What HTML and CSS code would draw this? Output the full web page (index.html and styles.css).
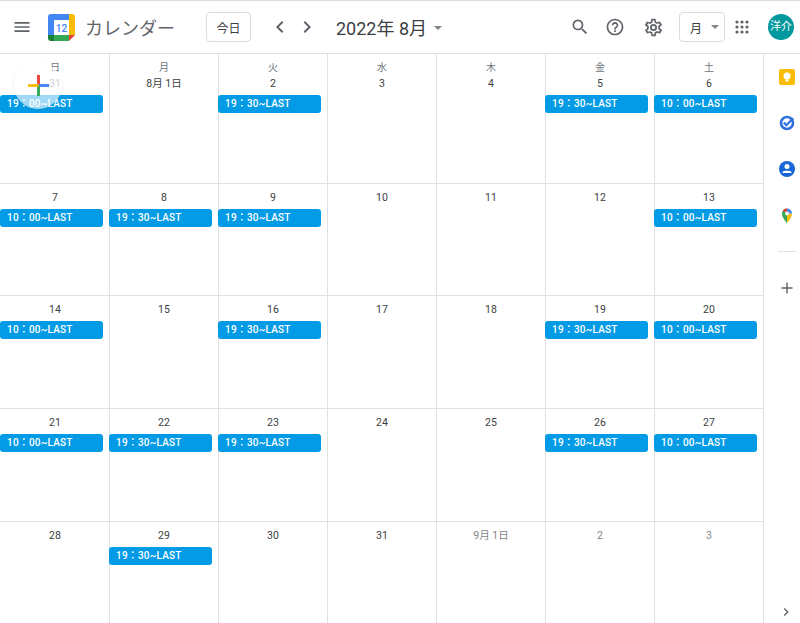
FILE: index.html
```html
<!DOCTYPE html>
<html lang="ja">
<head>
    <meta charset="UTF-8">
    <title>カレンダー</title>
    <link rel="stylesheet" href="styles.css">
</head>
<body>
    <header class="topbar">
        <button class="menu-btn" aria-label="メニュー">
            <svg width="20" height="20" viewBox="0 0 24 24" fill="#5f6368"><path d="M3 18h18v-2H3v2zm0-5h18v-2H3v2zm0-7v2h18V6H3z"/></svg>
        </button>
        <svg class="logo" width="27" height="27" viewBox="0 0 27 27">
            <path fill="#4285f4" d="M3 0h18v6H6v15H0V3a3 3 0 0 1 3-3z"/>
            <path fill="#fbbc04" d="M21 0h3a3 3 0 0 1 3 3v18h-6z"/>
            <path fill="#34a853" d="M6 21h15v6H6z"/>
            <path fill="#188038" d="M0 21h6v6H3a3 3 0 0 1-3-3z"/>
            <path fill="#ea4335" d="M21 27v-6h6z"/>
            <rect x="6" y="6" width="15" height="15" fill="#fff"/>
            <text x="13.5" y="17.5" class="logo-num">12</text>
        </svg>
        <span class="app-name">カレンダー</span>
        <button class="today-btn">今日</button>
        <div class="nav-arrows">
            <svg width="24" height="24" viewBox="0 0 24 24" fill="#5f6368"><path d="M15.4 7.4 14 6l-6 6 6 6 1.4-1.4-4.6-4.6z"/></svg>
            <svg width="24" height="24" viewBox="0 0 24 24" fill="#5f6368"><path d="M8.6 7.4 10 6l6 6-6 6-1.4-1.4 4.6-4.6z"/></svg>
        </div>
        <span class="month-title">2022年 8月</span>
        <span class="caret month-caret"></span>
        <div class="topbar-right">
            <svg width="20" height="20" viewBox="0 0 24 24" fill="#5f6368"><path d="M15.5 14h-.79l-.28-.27A6.47 6.47 0 0 0 16 9.5 6.5 6.5 0 1 0 9.5 16c1.61 0 3.09-.59 4.23-1.57l.27.28v.79l5 4.99L20.49 19l-4.99-5zm-6 0C7.01 14 5 11.99 5 9.5S7.01 5 9.5 5 14 7.01 14 9.5 11.99 14 9.5 14z"/></svg>
            <svg class="help-icon" width="20" height="20" viewBox="0 0 24 24" fill="#5f6368"><path d="M11 18h2v-2h-2v2zm1-16C6.48 2 2 6.48 2 12s4.48 10 10 10 10-4.48 10-10S17.52 2 12 2zm0 18c-4.41 0-8-3.59-8-8s3.59-8 8-8 8 3.59 8 8-3.59 8-8 8zm0-14c-2.21 0-4 1.79-4 4h2c0-1.1.9-2 2-2s2 .9 2 2c0 2-3 1.75-3 5h2c0-2.25 3-2.5 3-5 0-2.21-1.79-4-4-4z"/></svg>
            <svg class="gear-icon" width="21" height="21" viewBox="0 0 24 24" fill="#5f6368"><path d="M19.4 13a7.5 7.5 0 0 0 0-2l2.100-1.600a.5.5 0 0 0 .1-.6l-2-3.500a.5.5 0 0 0-.6-.2l-2.500 1a7.300 7.300 0 0 0-1.700-1l-.4-2.700a.5.5 0 0 0-.5-.4h-4a.5.5 0 0 0-.5.4l-.4 2.700a7.300 7.300 0 0 0-1.700 1l-2.500-1a.5.5 0 0 0-.6.2l-2 3.500a.5.5 0 0 0 .1.600L4.600 11a7.500 7.500 0 0 0 0 2l-2.100 1.600a.5.5 0 0 0-.1.600l2 3.500c.1.200.4.300.6.200l2.500-1c.5.400 1.100.7 1.700 1l.4 2.700c0 .2.200.4.500.4h4c.2 0 .5-.2.500-.4l.4-2.700c.6-.3 1.200-.6 1.700-1l2.500 1c.2.100.5 0 .6-.2l2-3.500a.5.5 0 0 0-.1-.6zm-1.900-1c0 .7-.1 1.200-.2 1.700l1.900 1.500-1 1.700-2.300-.9a6 6 0 0 1-2.600 1.500l-.3 2.500h-2l-.3-2.500a6 6 0 0 1-2.600-1.500l-2.300.9-1-1.700 1.900-1.500a6 6 0 0 1 0-3.400L4.800 8.800l1-1.700 2.300.9a6 6 0 0 1 2.600-1.500L11 4h2l.3 2.500A6 6 0 0 1 15.900 8l2.300-.9 1 1.700-1.900 1.500c.1.500.2 1 .2 1.700zM12 8a4 4 0 1 0 0 8 4 4 0 0 0 0-8zm0 6a2 2 0 1 1 0-4 2 2 0 0 1 0 4z"/></svg>
            <button class="view-btn">月<span class="caret"></span></button>
            <svg class="apps-icon" width="14" height="14" viewBox="0 0 14 14" fill="#5f6368">
                <circle cx="2" cy="2" r="1.6"/><circle cx="7" cy="2" r="1.6"/><circle cx="12" cy="2" r="1.6"/>
                <circle cx="2" cy="7" r="1.6"/><circle cx="7" cy="7" r="1.6"/><circle cx="12" cy="7" r="1.6"/>
                <circle cx="2" cy="12" r="1.6"/><circle cx="7" cy="12" r="1.6"/><circle cx="12" cy="12" r="1.6"/>
            </svg>
            <div class="avatar">洋介</div>
        </div>
    </header>

    <div class="main">
        <div class="month-grid">
            <div class="day"><span class="dow">日</span><span class="num muted">31</span><div class="event">19：00~LAST</div></div>
            <div class="day"><span class="dow">月</span><span class="num">8月 1日</span></div>
            <div class="day"><span class="dow">火</span><span class="num">2</span><div class="event">19：30~LAST</div></div>
            <div class="day"><span class="dow">水</span><span class="num">3</span></div>
            <div class="day"><span class="dow">木</span><span class="num">4</span></div>
            <div class="day"><span class="dow">金</span><span class="num">5</span><div class="event">19：30~LAST</div></div>
            <div class="day"><span class="dow">土</span><span class="num">6</span><div class="event">10：00~LAST</div></div>

            <div class="day"><span class="num">7</span><div class="event">10：00~LAST</div></div>
            <div class="day"><span class="num">8</span><div class="event">19：30~LAST</div></div>
            <div class="day"><span class="num">9</span><div class="event">19：30~LAST</div></div>
            <div class="day"><span class="num">10</span></div>
            <div class="day"><span class="num">11</span></div>
            <div class="day"><span class="num">12</span></div>
            <div class="day"><span class="num">13</span><div class="event">10：00~LAST</div></div>

            <div class="day"><span class="num">14</span><div class="event">10：00~LAST</div></div>
            <div class="day"><span class="num">15</span></div>
            <div class="day"><span class="num">16</span><div class="event">19：30~LAST</div></div>
            <div class="day"><span class="num">17</span></div>
            <div class="day"><span class="num">18</span></div>
            <div class="day"><span class="num">19</span><div class="event">19：30~LAST</div></div>
            <div class="day"><span class="num">20</span><div class="event">10：00~LAST</div></div>

            <div class="day"><span class="num">21</span><div class="event">10：00~LAST</div></div>
            <div class="day"><span class="num">22</span><div class="event">19：30~LAST</div></div>
            <div class="day"><span class="num">23</span><div class="event">19：30~LAST</div></div>
            <div class="day"><span class="num">24</span></div>
            <div class="day"><span class="num">25</span></div>
            <div class="day"><span class="num">26</span><div class="event">19：30~LAST</div></div>
            <div class="day"><span class="num">27</span><div class="event">10：00~LAST</div></div>

            <div class="day"><span class="num">28</span></div>
            <div class="day"><span class="num">29</span><div class="event">19：30~LAST</div></div>
            <div class="day"><span class="num">30</span></div>
            <div class="day"><span class="num">31</span></div>
            <div class="day"><span class="num muted">9月 1日</span></div>
            <div class="day"><span class="num muted">2</span></div>
            <div class="day"><span class="num muted">3</span></div>
        </div>

        <aside class="sidebar">
            <svg width="20" height="20" viewBox="0 0 20 20"><rect x="2" y="2" width="16" height="16" rx="2" fill="#fbbc04"/><circle cx="10" cy="9" r="3.5" fill="#fff"/><rect x="8.5" y="12.5" width="3" height="2" fill="#fff"/></svg>
            <svg width="20" height="20" viewBox="0 0 20 20"><circle cx="10" cy="10" r="6" fill="none" stroke="#2f6fe0" stroke-width="2.6"/><path d="M6.8 9.5l2.600 2.700 6.800-7" fill="none" stroke="#2f6fe0" stroke-width="2.2"/></svg>
            <svg width="20" height="20" viewBox="0 0 20 20"><circle cx="10" cy="10" r="8" fill="#1a66d6"/><circle cx="10" cy="7.5" r="2.500" fill="#fff"/><path d="M5.500 13c1-1.700 8-1.700 9 0v1h-9z" fill="#fff"/></svg>
            <svg width="20" height="20" viewBox="0 0 20 20"><path d="M10 18.500c-1-2.600-5-5.500-5-10a5 5 0 0 1 5-5z" fill="#34a853"/><path d="M10 18.500c1-2.600 5-5.500 5-10H10z" fill="#fbbc04"/><path d="M5.700 5.600A5 5 0 0 1 10 3.500V8z" fill="#ea4335"/><path d="M10 3.500a5 5 0 0 1 5 5h-5z" fill="#4285f4"/><circle cx="10" cy="8.500" r="1.900" fill="#fff"/></svg>
            <div class="side-rule"></div>
            <svg class="side-plus" width="20" height="20" viewBox="0 0 20 20"><path d="M9.300 4.500h1.400v4.800h4.800v1.400h-4.800v4.800H9.300v-4.800H4.500V9.300h4.800z" fill="#5f6368"/></svg>
            <svg class="side-expand" width="16" height="16" viewBox="0 0 24 24" fill="#5f6368"><path d="M8.600 7.400 10 6l6 6-6 6-1.400-1.400 4.600-4.600z"/></svg>
        </aside>
    </div>

    <div class="create-fab">
        <svg width="23" height="23" viewBox="0 0 24 24">
            <rect x="10.500" y="1" width="3" height="11" fill="#ea4335"/>
            <rect x="12" y="10.500" width="11" height="3" fill="#4285f4"/>
            <rect x="10.500" y="12" width="3" height="11" fill="#34a853"/>
            <rect x="1" y="10.500" width="11" height="3" fill="#fbbc04"/>
        </svg>
    </div>
</body>
</html>
```

FILE: styles.css
```css
html, body {
    margin: 0;
    padding: 0;
    height: 100%;
    overflow: hidden;
}
body {
    font-family: Roboto, "Noto Sans CJK JP", sans-serif;
    color: #3c4043;
    background: #fff;
    border-top: 1px solid #dadce0;
    box-sizing: border-box;
}
button {
    font-family: inherit;
    background: none;
    padding: 0;
    cursor: pointer;
}
.topbar {
    height: 52px;
    display: flex;
    align-items: center;
    border-bottom: 1px solid #dfe1e4;
}
.menu-btn {
    border: 0;
    margin-left: 12px;
    height: 20px;
}
.logo {
    margin-left: 16px;
}
.logo-num {
    font-family: Roboto, sans-serif;
    font-size: 10px;
    font-weight: 500;
    fill: #4285f4;
    text-anchor: middle;
}
.app-name {
    margin-left: 10px;
    font-size: 18px;
    color: #5f6368;
    width: 121px;
}
.today-btn {
    width: 45px;
    height: 30px;
    border: 1px solid #dadce0;
    border-radius: 4px;
    font-size: 12px;
    color: #3c4043;
}
.nav-arrows {
    display: flex;
    gap: 3px;
    margin-left: 17px;
}
.month-title {
    margin-left: 17px;
    font-size: 18px;
    color: #3c4043;
}
.caret {
    display: inline-block;
    width: 0;
    height: 0;
    border-left: 4px solid transparent;
    border-right: 4px solid transparent;
    border-top: 4px solid #80868b;
}
.month-caret {
    margin-left: 7px;
    margin-top: 2px;
}
.topbar-right {
    margin-left: auto;
    display: flex;
    align-items: center;
}
.help-icon {
    margin-left: 15px;
}
.gear-icon {
    margin-left: 18px;
}
.view-btn {
    margin-left: 15px;
    width: 46px;
    height: 30px;
    border: 1px solid #dadce0;
    border-radius: 4px;
    font-size: 12px;
    color: #3c4043;
    display: flex;
    align-items: center;
    padding-left: 10px;
    gap: 9px;
    box-sizing: border-box;
}
.apps-icon {
    margin-left: 10px;
}
.avatar {
    width: 26px;
    height: 26px;
    margin: 0 6px 0 19px;
    border-radius: 50%;
    background: #00979d;
    color: #fff;
    font-size: 11px;
    line-height: 26px;
    text-align: center;
    white-space: nowrap;
}
.main {
    display: flex;
    height: 569px;
}
.month-grid {
    width: 763px;
    display: grid;
    grid-template-columns: repeat(7, 109px);
    grid-template-rows: 130px 112px 113px 113px 1fr;
}
.day {
    border-left: 1px solid #dfe1e4;
    border-bottom: 1px solid #dfe1e4;
    display: flex;
    flex-direction: column;
    align-items: center;
    box-sizing: border-box;
    padding-top: 6px;
    min-width: 0;
}
.day:nth-child(7n+1) {
    border-left-color: transparent;
}
.day:nth-last-child(-n+7) {
    border-bottom: 0;
}
.dow {
    font-size: 10px;
    line-height: 16px;
    color: #70757a;
}
.num {
    font-size: 10.5px;
    line-height: 16px;
    color: #3c4043;
    white-space: nowrap;
}
.num.muted {
    color: #80868b;
}
.event {
    align-self: flex-start;
    box-sizing: border-box;
    width: 103px;
    height: 18px;
    margin: 3px 0 0 -1px;
    padding-left: 7px;
    border-radius: 3px;
    background: #039be5;
    color: #fff;
    font-size: 10px;
    font-weight: 500;
    letter-spacing: 0.2px;
    line-height: 18px;
    white-space: nowrap;
}
.sidebar {
    flex: 1;
    position: relative;
    display: flex;
    flex-direction: column;
    align-items: center;
    box-sizing: border-box;
    border-left: 1px solid #dfe1e4;
    padding: 13px 0 0 10px;
    gap: 26px;
}
.side-rule {
    width: 18px;
    height: 1px;
    background: #dfe1e4;
}
.side-expand {
    position: absolute;
    right: 6px;
    bottom: 3px;
}
.create-fab {
    position: absolute;
    left: 14px;
    top: 62px;
    width: 48px;
    height: 47px;
    border-radius: 50%;
    background: rgba(255, 255, 255, 0.62);
    box-shadow: 0 1px 3px rgba(60, 64, 67, 0.1);
    display: flex;
    align-items: center;
    justify-content: center;
}
```
